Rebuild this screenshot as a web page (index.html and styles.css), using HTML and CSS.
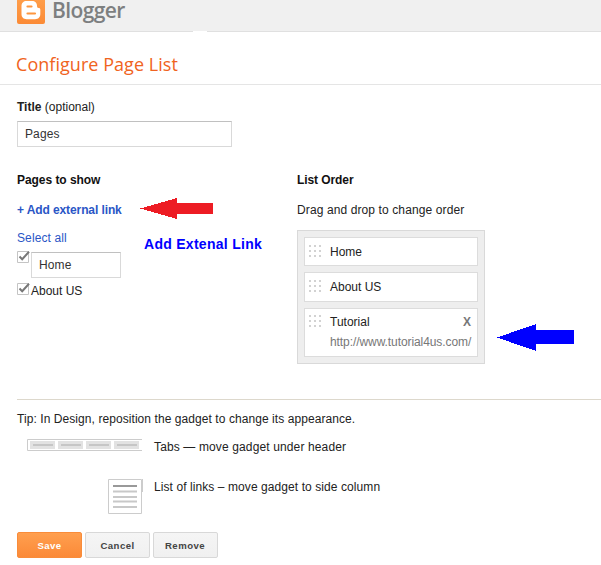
FILE: index.html
```html
<!DOCTYPE html>
<html lang="en">
<head>
<meta charset="utf-8">
<title>Configure Page List</title>
<link rel="stylesheet" href="styles.css">
</head>
<body>
<header class="topbar">
  <svg class="logo" width="28" height="24" viewBox="0 0 28 24">
    <defs><linearGradient id="lg" x1="0" y1="0" x2="0" y2="1"><stop offset="0" stop-color="#ffa04c"/><stop offset="1" stop-color="#fb8a35"/></linearGradient></defs>
    <rect y="-4" width="28" height="28" rx="2" fill="url(#lg)"/>
    <path d="M9.500 1H15c3 0 5 2 5 4.800 0 1.600.5 2.200 1.600 2.200 1.200 0 1.700.6 1.700 1.800V14c0 3.200-2 5.200-5.200 5.200H9.700C6.500 19.200 4.500 17.200 4.500 14V6c0-3 2-5 5-5z" fill="#fff"/>
    <path d="M10.500 6.500h4M10.500 13.500h7.500" stroke="#fd963f" stroke-width="2.200" stroke-linecap="round"/>
  </svg>
  <span class="brand">Blogger</span>
  <i class="notch"></i>
</header>
<h1 class="title">Configure Page List</h1>
<main class="content">
  <p class="line label"><b>Title</b> (optional)</p>
  <div class="field">Pages</div>
  <div class="columns">
    <section class="show">
      <h2 class="line">Pages to show</h2>
      <a class="line add">+ Add external link</a>
      <a class="line select">Select all</a>
      <div class="pick first">
        <svg class="check" width="14" height="13" viewBox="0 0 14 13"><path d="M.5.5h11v11H.5z" fill="#fff" stroke="#c4c4c4"/><path d="M2.500 5.500l2.700 2.700L12 .8" fill="none" stroke="#777" stroke-width="2"/></svg>
        <div class="field small">Home</div>
      </div>
      <div class="pick">
        <svg class="check" width="14" height="13" viewBox="0 0 14 13"><path d="M.5.5h11v11H.5z" fill="#fff" stroke="#c4c4c4"/><path d="M2.500 5.500l2.700 2.700L12 .8" fill="none" stroke="#777" stroke-width="2"/></svg>
        <span class="line">About US</span>
      </div>
    </section>
    <section class="order">
      <h2 class="line">List Order</h2>
      <p class="line drag">Drag and drop to change order</p>
      <div class="list">
        <div class="item"><i class="grip"></i><span class="line name">Home</span></div>
        <div class="item about"><i class="grip"></i><span class="line name">About US</span></div>
        <div class="item tutorial"><i class="grip"></i><div class="body"><div class="line head"><span>Tutorial</span><b class="x">X</b></div><div class="line url">http://www.tutorial4us.com/</div></div></div>
      </div>
    </section>
  </div>
  <div class="tips">
    <p class="line tip">Tip: In Design, reposition the gadget to change its appearance.</p>
    <div class="row tabs">
      <svg width="127" height="12" viewBox="0 0 127 12"><path d="M125 .5H10.500v11H125" fill="none" stroke="#ccc"/><g fill="#e2e2e2"><path d="M13 2h25v8H13zM41 2h25v8H41zM69 2h25v8H69zM97 2h25v8H97z"/></g><path d="M16 6h20M44 6h20M72 6h20M100 6h20" stroke="#c6c6c6" stroke-width="2"/></svg>
      <span class="line tabtext">Tabs — move gadget under header</span>
    </div>
    <div class="row links">
      <svg width="127" height="36" viewBox="0 0 127 36"><path d="M91.500.5h33v34h-33z" fill="#fff" stroke="#ccc"/><path d="M125.500 0v13" stroke="#ccc"/><path d="M96 7h24" stroke="#999" stroke-width="2"/><path d="M96 12.500h24M96 18h24M96 22.500h24M96 28h24" stroke="#c8c8c8" stroke-width="2"/></svg>
      <span class="line linktext">List of links – move gadget to side column</span>
    </div>
  </div>
  <div class="buttons">
    <button class="btn save">Save</button><button class="btn">Cancel</button><button class="btn remove">Remove</button>
  </div>
</main>
<svg class="arrow red" width="74" height="21" viewBox="0 0 74 21" shape-rendering="crispEdges"><path d="M0 10.500L37 0v5h36v11H37v5z" fill="#ed1c24"/></svg>
<div class="note">Add Extenal Link</div>
<svg class="arrow blue" width="77" height="27" viewBox="0 0 77 27" shape-rendering="crispEdges"><path d="M0 13.500L39 0v6h38v14H39v7z" fill="#00f"/></svg>
</body>
</html>
```
FILE: styles.css
```css
* { box-sizing: border-box; }
body { margin: 0; height: 565px; overflow: hidden; position: relative; background: #fff; color: #222; font: 12px/16px "Liberation Sans", Arial, sans-serif; }
h1, h2, p { margin: 0; }
h2 { font-size: 12px; font-weight: bold; color: #111; }
.line { display: block; height: 16px; line-height: 16px; white-space: nowrap; }
.topbar { position: relative; display: flex; height: 32px; padding-left: 17px; background: #f0f0f0; border-bottom: 1px solid #e0e0e0; }
.brand { margin-left: 7px; height: 20px; font: 600 21px/20px "Open Sans", sans-serif; letter-spacing: -0.6px; color: #7d7f80; }
.notch { position: absolute; left: 193px; top: 31px; width: 14px; height: 1px; background: #fff; }
.title { height: 53px; padding-left: 16px; border-bottom: 1px solid #e5e5e5; font: 400 18px/65px "Open Sans", sans-serif; letter-spacing: 0.04px; color: #f06321; }
.content { padding: 14px 0 0 17px; }
.field { width: 215px; height: 26px; padding-left: 7px; border: 1px solid #d9d9d9; border-top-color: #c0c0c0; background: #fff; line-height: 24px; letter-spacing: 0.12px; color: #333; }
.label { margin-bottom: 6px; }
.columns { display: flex; height: 252px; padding-top: 25px; }
.show { width: 280px; }
.show h2 { letter-spacing: -0.05px; }
.add { margin-top: 14px; font-weight: bold; letter-spacing: -0.1px; color: #2a56c6; }
.select { margin-top: 12px; letter-spacing: 0.1px; color: #2a56c6; }
.pick { display: flex; align-items: flex-start; height: 31px; margin-top: 5px; }
.pick.first { height: 27px; }
.check { flex: none; }
.small { width: 90px; margin-top: 1px; }
.order { width: 188px; }
.order h2 { letter-spacing: -0.08px; }
.drag { margin-top: 14px; letter-spacing: 0.11px; }
.list { display: flex; flex-direction: column; gap: 6px; height: 134px; margin-top: 12px; padding: 6px; border: 1px solid #d9d9d9; background: #eee; }
.item { display: flex; width: 174px; height: 29px; padding: 6px 6px 0 4px; border: 1px solid #dcdcdc; background: #fff; }
.about { height: 30px; }
.tutorial { height: 49px; padding-top: 5px; }
.grip { flex: none; width: 12px; height: 12px; margin: 1px 9px 0 0; background: repeating-linear-gradient(90deg, #d2d2d2 0 2px, transparent 2px 5px); mask: repeating-linear-gradient(#000 0 2px, transparent 2px 5px); }
.body { width: 141px; }
.head { display: flex; justify-content: space-between; }
.x { color: #777; }
.url { margin-top: 4px; letter-spacing: -0.08px; color: #777; }
.tips { height: 133px; padding-top: 11px; border-top: 1px solid #ddd8cc; }
.tip { letter-spacing: 0.07px; }
.row { display: flex; }
.tabs { height: 40px; margin-top: 12px; }
.row .line { margin-left: 10px; }
.tabtext { letter-spacing: 0.13px; }
.linktext { letter-spacing: 0.08px; }
.buttons { display: flex; gap: 3px; }
.btn { width: 65px; height: 26px; padding: 1px 0 0; border: 1px solid #d8d8d8; border-radius: 2px; background: linear-gradient(#f5f5f5, #f0f0f0); font: bold 9.6px/24px "Liberation Sans", Arial, sans-serif; letter-spacing: 0.45px; color: #444; }
.remove { padding-right: 1px; }
.save { border-color: #f98c3a; background: linear-gradient(#ff9f4f, #fb8a38); color: #fff; }
.arrow { position: absolute; }
.red { left: 140px; top: 198px; }
.blue { left: 497px; top: 324px; }
.note { position: absolute; left: 144px; top: 235px; font: bold 14px/18px "Liberation Sans", Arial, sans-serif; letter-spacing: 0.28px; color: #00f; white-space: nowrap; }
```
